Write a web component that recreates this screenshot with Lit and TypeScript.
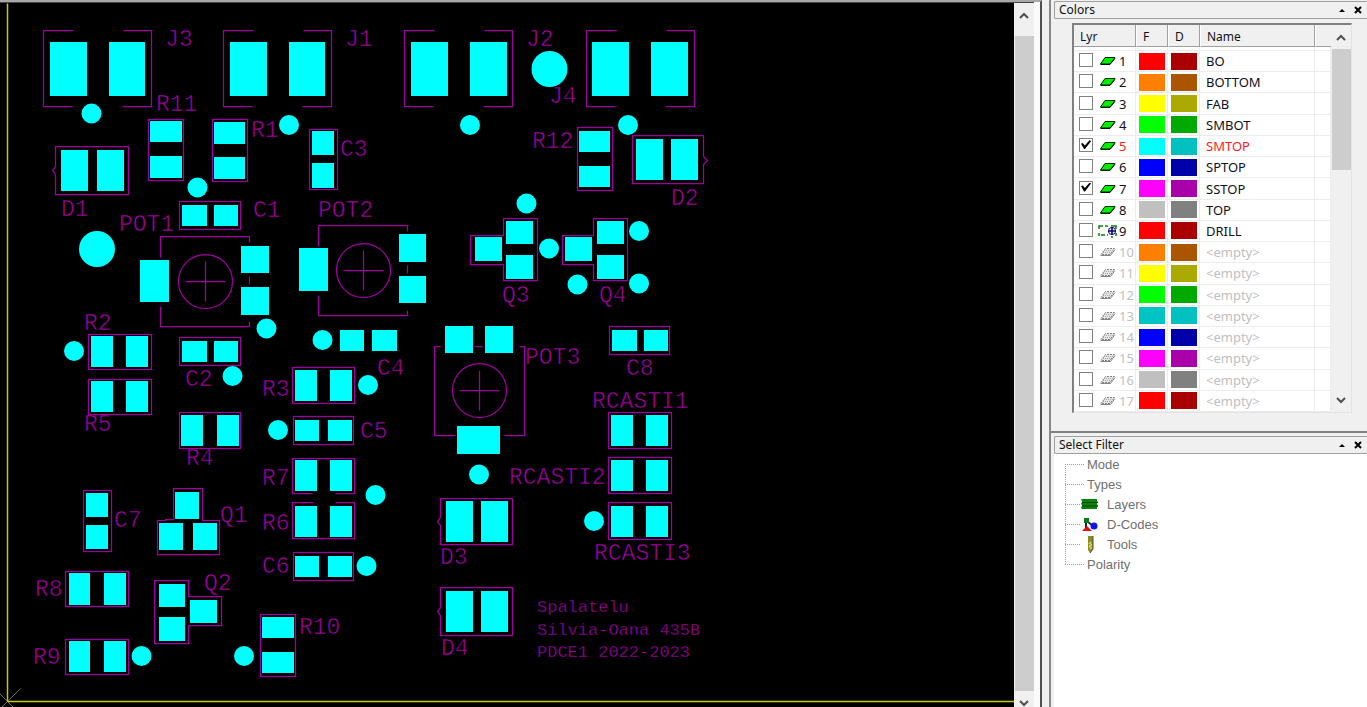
import { LitElement, html, svg, css } from "lit";
import { customElement } from "lit/decorators.js";
import { classMap } from "lit/directives/class-map.js";
import { styleMap } from "lit/directives/style-map.js";

type Box = [number, number, number, number];

// Copper pads: left, top, right, bottom
const PADS: Box[] = [
  [50, 42, 87, 96], [109, 42, 145, 96], [230, 42, 267, 96], [289, 42, 325, 96],
  [411, 42, 448, 96], [470, 42, 507, 96], [592, 42, 629, 96], [651, 42, 688, 96],
  [150, 121, 182, 142], [150, 156, 182, 178], [214, 122, 245, 144], [214, 157, 245, 179],
  [312, 131, 334, 155], [312, 163, 334, 188], [61, 150, 88, 191], [97, 150, 124, 191],
  [182, 205, 207, 226], [214, 205, 238, 226], [91, 336, 113, 367], [126, 336, 148, 367],
  [91, 381, 113, 412], [126, 381, 148, 412], [182, 341, 207, 362], [214, 341, 238, 362],
  [181, 415, 203, 446], [217, 415, 239, 446], [295, 370, 317, 401], [330, 370, 352, 401],
  [295, 420, 319, 441], [328, 420, 352, 441], [295, 460, 317, 491], [330, 460, 352, 491],
  [295, 506, 317, 537], [330, 506, 352, 537], [295, 556, 319, 577], [328, 556, 352, 577],
  [86, 493, 108, 517], [86, 525, 108, 549], [175, 492, 199, 519], [159, 523, 183, 550],
  [193, 523, 217, 550], [69, 573, 90, 605], [104, 573, 126, 605], [69, 641, 90, 672],
  [104, 641, 126, 672], [159, 584, 185, 607], [159, 617, 185, 641], [190, 600, 217, 623],
  [262, 617, 294, 638], [262, 652, 294, 673], [579, 131, 610, 152], [579, 166, 610, 187],
  [636, 139, 663, 180], [671, 139, 698, 180], [475, 237, 502, 261], [506, 221, 533, 244],
  [506, 255, 533, 279], [565, 237, 592, 261], [597, 221, 624, 244], [597, 255, 624, 279],
  [340, 330, 364, 351], [372, 330, 397, 351], [612, 330, 637, 351], [644, 330, 668, 351],
  [611, 415, 633, 446], [646, 415, 668, 446], [611, 460, 633, 491], [646, 460, 668, 491],
  [611, 506, 633, 537], [646, 506, 668, 537], [446, 501, 473, 542], [481, 501, 508, 542],
  [446, 591, 473, 632], [481, 591, 508, 632], [140, 260, 169, 302], [241, 246, 269, 273],
  [241, 287, 269, 315], [299, 248, 328, 291], [399, 234, 426, 262], [399, 276, 426, 303],
  [445, 326, 473, 353], [485, 326, 513, 353], [457, 426, 500, 454],
];

// Round pads: centre x, centre y, radius
const DOTS: [number, number, number][] = [
  [91.5, 113.5, 10], [289, 125, 10], [197.5, 187.5, 10], [470, 125, 10], [628, 125, 10],
  [526.5, 203.5, 10], [549, 248.5, 10], [639, 231, 10], [577.5, 284.5, 10], [639, 283.5, 10],
  [266.5, 328.5, 10], [74, 351, 10], [232.5, 376, 10], [322.5, 340, 10], [368, 385, 10],
  [278, 430, 10], [479, 474.5, 10], [375.5, 495, 10], [366.5, 566, 10], [594, 521, 10],
  [141.5, 656, 10], [244, 656, 10], [549.5, 69, 18], [97, 249, 18],
];

// Closed silkscreen frames: left, top, right, bottom
const FRAMES: Box[] = [
  [148, 119, 183, 180], [212, 119, 247, 181], [309, 129, 337, 189], [179, 201, 240, 229],
  [88, 334, 151, 369], [88, 379, 151, 414], [179, 337, 240, 365], [179, 412, 240, 448],
  [292, 367, 354, 403], [293, 416, 353, 444], [293, 552, 353, 580], [83, 490, 111, 551],
  [65, 571, 128, 606], [65, 639, 128, 674], [260, 614, 295, 676], [577, 127, 612, 190],
  [609, 326, 669, 354], [608, 412, 671, 448], [608, 457, 671, 493], [608, 502, 671, 539],
];

const connector = (l: number) =>
  `M${l + 30} 30H${l}V106H${l + 29}M${l + 80} 30H${l + 108}V106H${l + 79}`;
const diode = (l: number, t: number, r: number, b: number, m: number) =>
  `M${l} ${m - 4}V${t}H${r}V${b}H${l}V${m + 4}M${l} ${m - 4}l-3 4l3 4`;
const sideTrimmer = (l: number, t: number) =>
  `M${l} ${t + 21}V${t}H${l + 89}V${t + 6}M${l + 89} ${t + 40}v8M${l + 89} ${t + 85}v5H${l}V${t + 70}`;

const TRACES: string[] = [
  connector(43), connector(223), connector(404), connector(586),
  diode(55, 146, 128, 194, 170), diode(440, 498, 512, 544, 521), diode(440, 587, 512, 635, 611),
  "M703 156V135H632V183H703V164l4 -4l-4 -4",
  "M312 493H292V458H354V493H335", "M313 502H292V538H354V502H335",
  "M173 488H202V520H219V554H157V520H165V519H173Z",
  "M154 580H188V596H221V625H188V643H154Z",
  "M503 218H537V280H503V264H470V235H503Z",
  "M593 218H627V280H593V264H562V235H593Z",
  sideTrimmer(160, 236), sideTrimmer(318, 225),
  "M440 346H434V435H455M474 346h8M519 346H524V435H504",
];

const TRIMMERS: [number, number][] = [[205, 281], [363, 270], [479, 390]];

// Designators: text, x, baseline
const LABELS: [string, number, number][] = [
  ["J3", 165, 46], ["J1", 345, 46], ["J2", 526, 46], ["J4", 549, 103],
  ["R11", 156, 111], ["R1", 251, 137], ["C3", 340, 156], ["D1", 61, 216],
  ["C1", 253, 217], ["POT1", 119, 231], ["POT2", 318, 217], ["R12", 532, 148],
  ["D2", 671, 205], ["Q3", 502, 302], ["Q4", 599, 302], ["C4", 377, 375],
  ["POT3", 525, 364], ["C8", 626, 375], ["RCASTI1", 592, 408], ["R2", 84, 330],
  ["C2", 185, 386], ["R5", 84, 431], ["R4", 186, 465], ["R3", 262, 396],
  ["C5", 360, 438], ["R7", 262, 485], ["R6", 262, 530], ["C6", 262, 573],
  ["C7", 114, 527], ["Q1", 220, 522], ["R8", 35, 596], ["Q2", 204, 590],
  ["R9", 33, 664], ["R10", 299, 634], ["RCASTI2", 509, 484], ["D3", 440, 564],
  ["RCASTI3", 594, 560], ["D4", 441, 655],
];

const NOTES: [string, number][] = [
  ["Spalatelu", 612], ["Silvia-Oana 435B", 635], ["PDCE1 2022-2023", 657],
];

const PALETTE: [string, string][] = [
  ["#ff0000", "#aa0000"], ["#ff8000", "#aa5500"], ["#ffff00", "#aaaa00"],
  ["#00ff00", "#00aa00"], ["#00ffff", "#00c0c0"], ["#0000ff", "#0000aa"],
  ["#ff00ff", "#aa00aa"], ["#c0c0c0", "#808080"],
];

const NAMES = ["BO", "BOTTOM", "FAB", "SMBOT", "SMTOP", "SPTOP", "SSTOP", "TOP", "DRILL"];
const VISIBLE = [5, 7];
const ACTIVE = 5;

@customElement("board-view")
class BoardView extends LitElement {
  static styles = css`
    :host { display: block; flex: 1; min-width: 0; background: #000; overflow: hidden; }
    .canvas { display: block; width: 100%; height: 100%; }
    .pad { fill: #00ffff; }
    .silk { fill: none; stroke: #a000a0; stroke-width: 1.25; }
    .crisp { shape-rendering: crispEdges; }
    .label {
      fill: #a800a8; stroke: #000; stroke-width: .6;
      font-family: "Liberation Mono", monospace; font-size: 23px;
    }
    .note { font-size: 17px; stroke-width: .3; fill: #9c009c; }
    .axis { stroke: #c8c800; stroke-width: 1.5; }
    .origin { stroke: #686868; stroke-width: 1; fill: none; }
  `;

  render() {
    return html`
      <svg class="canvas" viewBox="0 3 1014 704" preserveAspectRatio="xMinYMin meet" role="img" aria-label="Board layout">
        ${LABELS.map(([text, x, y]) => svg`<text class="label" x=${x} y=${y}>${text}</text>`)}
        ${NOTES.map(([text, y]) => svg`<text class="label note" x="537" y=${y}>${text}</text>`)}
        <g transform="translate(.5 .5)">
          <path class="origin" d="M-6 688L7 701L-6 714M20 688L7 701L20 714" />
          <g class="axis">
            <line x1="7" y1="3" x2="7" y2="701" />
            <line x1="7" y1="701" x2="1014" y2="701" />
          </g>
          <g class="silk">
            ${FRAMES.map(([l, t, r, b]) => svg`<rect x=${l} y=${t} width=${r - l} height=${b - t} />`)}
            ${TRACES.map((d) => svg`<path d=${d} />`)}
            ${TRIMMERS.map(([x, y]) => svg`<path d="M${x - 20} ${y}h40M${x} ${y - 20}v40" />`)}
            ${TRIMMERS.map(([x, y]) => svg`<circle cx=${x} cy=${y} r="27" />`)}
          </g>
        </g>
        <g class="pad crisp">
          ${PADS.map(([l, t, r, b]) => svg`<rect x=${l} y=${t} width=${r - l} height=${b - t} />`)}
        </g>
        <g class="pad">
          ${DOTS.map(([x, y, r]) => svg`<circle cx=${x} cy=${y} r=${r} />`)}
        </g>
      </svg>
    `;
  }
}

@customElement("scroll-rail")
class ScrollRail extends LitElement {
  static properties = { before: { type: Number }, thumb: { type: Number }, after: { type: Number } };
  declare before: number;
  declare thumb: number;
  declare after: number;

  static styles = css`
    :host { display: flex; flex-direction: column; width: 20px; background: #f0f0f0; }
    .arrow {
      display: grid; place-items: center; height: 24px; padding: 0;
      border: 0; background: none; flex: none;
    }
    .arrow svg { fill: none; stroke: #505050; stroke-width: 2; }
    .track { flex: 1; display: flex; flex-direction: column; }
    .thumb { background: #cdcdcd; margin-left: 1px; }
  `;

  render() {
    return html`
      <button class="arrow" aria-label="Scroll up">
        <svg width="10" height="7"><path d="M1 6L5 2L9 6" /></svg>
      </button>
      <div class="track">
        <div style=${styleMap({ flex: String(this.before) })}></div>
        <div class="thumb" style=${styleMap({ flex: String(this.thumb) })}></div>
        <div style=${styleMap({ flex: String(this.after) })}></div>
      </div>
      <button class="arrow" aria-label="Scroll down">
        <svg width="10" height="7"><path d="M1 1L5 5L9 1" /></svg>
      </button>
    `;
  }
}

@customElement("panel-title")
class PanelTitle extends LitElement {
  static properties = { text: {} };
  declare text: string;

  static styles = css`
    :host {
      display: flex; align-items: center; height: 16px; padding: 0 1px 0 4px;
      border: 1px solid #a0a0a0; border-right: 0; border-radius: 2px 0 0 2px; background: #f0f0f0;
      font: 12px/16px "Noto Sans", sans-serif; color: #111;
    }
    .name { flex: 1; margin: 0; font: inherit; }
    .tool { display: grid; place-items: center; width: 16px; height: 16px; padding: 0; border: 0; background: none; }
  `;

  render() {
    return html`
      <h2 class="name">${this.text}</h2>
      <button class="tool" aria-label="Collapse"><svg width="6" height="3"><path d="M0 3L3 0L6 3Z" /></svg></button>
      <button class="tool" aria-label="Close">
        <svg width="8" height="8"><path d="M1 1L7 7M7 1L1 7" stroke="#000" stroke-width="2" /></svg>
      </button>
    `;
  }
}

@customElement("layer-table")
class LayerTable extends LitElement {
  static styles = css`
    :host {
      display: flex; margin: 4px 15px 18px 18px; border: 2px solid #808080;
      border-right: 1px solid #e3e3e3; border-bottom: 1px solid #e3e3e3; background: #fff;
      font: 13px/20px "Noto Sans", sans-serif; color: #101020;
    }
    .grid { flex: 1; width: 100%; min-width: 0; height: 387px; border-collapse: separate; border-spacing: 0; table-layout: fixed; }
    .lyr { width: 62px; }
    .chip { width: 32px; }
    .tail { width: 16px; }
    .head {
      box-sizing: border-box; height: 22px; padding: 2px 0 0 6px; text-align: left;
      font-size: 12px; font-weight: 400; line-height: 19px;
      background: #f0f0f0; border-right: 1px solid #a0a0a0; border-bottom: 1px solid #a0a0a0;
    }
    .head + .head { border-left: 1px solid #fff; }
    .head:last-child { border-right: 0; }
    .gap { height: 3px; padding: 0; border-right: 1px solid #ececec; border-bottom: 1px solid #ececec; }
    .cell { padding: 0; border-right: 1px solid #ececec; border-bottom: 1px solid #ececec; white-space: nowrap; }
    .pick { display: flex; align-items: center; height: 20px; padding-left: 5px; }
    .box {
      appearance: none; width: 14px; height: 14px; margin: 0 5px 2px 0; border: 1px solid #808080;
      background: #fff; flex: none;
    }
    .box:checked::before {
      content: ""; display: block; width: 10px; height: 9px; margin: 1px; background: #000;
      clip-path: polygon(0 40%, 18% 34%, 38% 60%, 88% 0, 100% 12%, 40% 100%, 30% 100%);
    }
    .icon { width: 20px; height: 14px; flex: none; }
    .no { padding-left: 1px; }
    .swatch { display: block; height: 17px; margin: 0 2px 0 3px; }
    .name { padding-left: 6px; }
    .active { color: #ff1a1a; }
    .empty { color: #c0c0c0; }
    .rail { width: 20px; flex: none; }
  `;

  icon(n: number) {
    if (n === 9) {
      return html`<svg class="icon" viewBox="0 0 20 14" fill="none">
        <path d="M1 5V2H5M7 2H10M1 9V12M3 11H7M9 11H10M13 2H18V5M18 9V12M13 13H15" stroke="#0a800a" stroke-width="1.5" />
        <circle cx="14" cy="7" r="3.6" fill="#fff" stroke="#00006c" />
        <path d="M14 4V10M11 7H17" stroke="#00006c" stroke-width="1.6" />
      </svg>`;
    }
    if (n > 9) {
      return html`<svg class="icon" viewBox="0 0 20 14">
        <path d="M3 9.500L7.500 3.500H16.500L12 9.500Z" fill="#e4e4e4" stroke="#808080" stroke-dasharray="2 1" />
        <path d="M2.500 10.500H12.500L17 4.500" fill="none" stroke="#858585" />
        <path d="M6 5.500H14M5 7.500H12" stroke="#aaa" stroke-dasharray="1 1" />
      </svg>`;
    }
    return html`<svg class="icon" viewBox="0 0 20 14">
      <path d="M2.500 10L7 3.500H17L12 10Z" fill="#00f000" stroke="#002800" />
      <path d="M2.500 10.500H12L17 4.500" fill="none" stroke="#001800" />
    </svg>`;
  }

  row(n: number) {
    // Layers 9 and up repeat the palette, with 17 starting it again.
    const [bright, dim] = PALETTE[(n - 1) % 8];
    const tint = n === 13 ? "#00c4c4" : bright;
    const id = `layer-${n}`;
    const tone = { active: n === ACTIVE, empty: n > 9 };
    return html`<tr>
      <td class="cell">
        <div class="pick">
          <input class="box" type="checkbox" id=${id} ?checked=${VISIBLE.includes(n)} />
          ${this.icon(n)}
          <label class=${classMap({ no: true, ...tone })} for=${id}>${n}</label>
        </div>
      </td>
      <td class="cell"><span class="swatch" style=${styleMap({ background: tint })}></span></td>
      <td class="cell"><span class="swatch" style=${styleMap({ background: dim })}></span></td>
      <td class=${classMap({ cell: true, name: true, ...tone })}>${NAMES[n - 1] ?? "<empty>"}</td>
      <td class="cell"></td>
    </tr>`;
  }

  render() {
    return html`
      <table class="grid">
        <thead>
          <tr>
            <th class="head lyr">Lyr</th><th class="head chip">F</th><th class="head chip">D</th>
            <th class="head">Name</th><th class="head tail"></th>
          </tr>
          <tr><td class="gap"></td><td class="gap"></td><td class="gap"></td><td class="gap"></td><td class="gap"></td></tr>
        </thead>
        <tbody>${Array.from({ length: 17 }, (_, i) => this.row(i + 1))}</tbody>
      </table>
      <scroll-rail class="rail" .before=${0} .thumb=${121} .after=${218}></scroll-rail>
    `;
  }
}

@customElement("filter-tree")
class FilterTree extends LitElement {
  static styles = css`
    :host { display: block; flex: 1; background: #fff; font: 13px/20px "Liberation Sans", Arial, sans-serif; color: #707070; }
    .tree { list-style: none; margin: 0 0 0 11px; padding: 1px 0 0; }
    .item { display: flex; align-items: center; height: 20px; }
    .stem { width: 20px; height: 20px; flex: none; fill: none; stroke: #a0a0a0; stroke-dasharray: 1 1; shape-rendering: crispEdges; }
    .short { width: 16px; }
    .icon { width: 18px; height: 20px; margin-right: 8px; flex: none; }
    .text { padding-left: 2px; }
    .icon + .text { padding-left: 0; }
  `;

  glyphs: Record<string, unknown> = {
    Layers: html`<svg class="icon" viewBox="0 0 18 20">
      <path d="M0 4H16V6L17 7L16 8V9L17 11L16 12V14H1L0 13L1 11V10L0 9L1 7V6Z" fill="#118011" />
      <path d="M1 7.500H17M1 11H17" stroke="#064c06" />
    </svg>`,
    "D-Codes": html`<svg class="icon" viewBox="0 0 18 20">
      <path d="M5 6V14M7 7L12 11" stroke="#222" stroke-width="2" />
      <path d="M3 3H8V8H3Z" fill="#0a7a18" /><path d="M1 16L6 11L11 16Z" fill="#e01010" />
      <circle cx="13" cy="11" r="3.500" fill="#1010f0" />
    </svg>`,
    Tools: html`<svg class="icon" viewBox="0 0 18 20">
      <path d="M7 1L12 1V14L9 18L7 15Z" fill="#8a8a30" />
      <path d="M8 9L10 7M8 12L11 9M9 14L11 12" stroke="#e8e040" stroke-width="1.500" />
      <path d="M12 1V14L9 18" stroke="#505020" fill="none" />
    </svg>`,
  };

  render() {
    const items = ["Mode", "Types", "Layers", "D-Codes", "Tools", "Polarity"];
    return html`<ul class="tree">
      ${items.map((name, i) => {
        const stem = i === 0 ? "M.5 9V20" : i === items.length - 1 ? "M.5 0V10" : "M.5 0V20";
        return html`<li class="item">
          <svg class=${classMap({ stem: true, short: !!this.glyphs[name] })}><path d="${stem}M0 9.500H20" /></svg>
          ${this.glyphs[name] ?? ""}<span class="text">${name}</span>
        </li>`;
      })}
    </ul>`;
  }
}

@customElement("app-root")
class AppRoot extends LitElement {
  static styles = css`
    :host { display: flex; height: 100vh; overflow: hidden; background: #f0f0f0; }
    .work { flex: 1; min-width: 0; display: flex; border-top: 2px solid #a8a8a8; border-right: 2px solid #505050; }
    .view { flex: 1; min-width: 0; display: flex; border-top: 1px solid #484848; }
    .edge { width: 6px; background: #fafafa; }
    .side { width: 316px; display: flex; flex-direction: column; margin-left: 7px; border-left: 2px solid #888; }
    .colors { padding: 1px 0 0 3px; border-bottom: 2px solid #808080; }
    .filter { flex: 1; display: flex; flex-direction: column; padding: 3px 0 0 3px; }
    .rail { width: 20px; margin-bottom: -8px; }
  `;

  render() {
    return html`
      <main class="work">
        <div class="view">
          <board-view></board-view>
          <scroll-rail class="rail" .before=${9} .thumb=${655} .after=${0}></scroll-rail>
        </div>
        <div class="edge"></div>
      </main>
      <aside class="side">
        <section class="colors"><panel-title .text=${"Colors"}></panel-title><layer-table></layer-table></section>
        <section class="filter"><panel-title .text=${"Select Filter"}></panel-title><filter-tree></filter-tree></section>
      </aside>
    `;
  }
}
